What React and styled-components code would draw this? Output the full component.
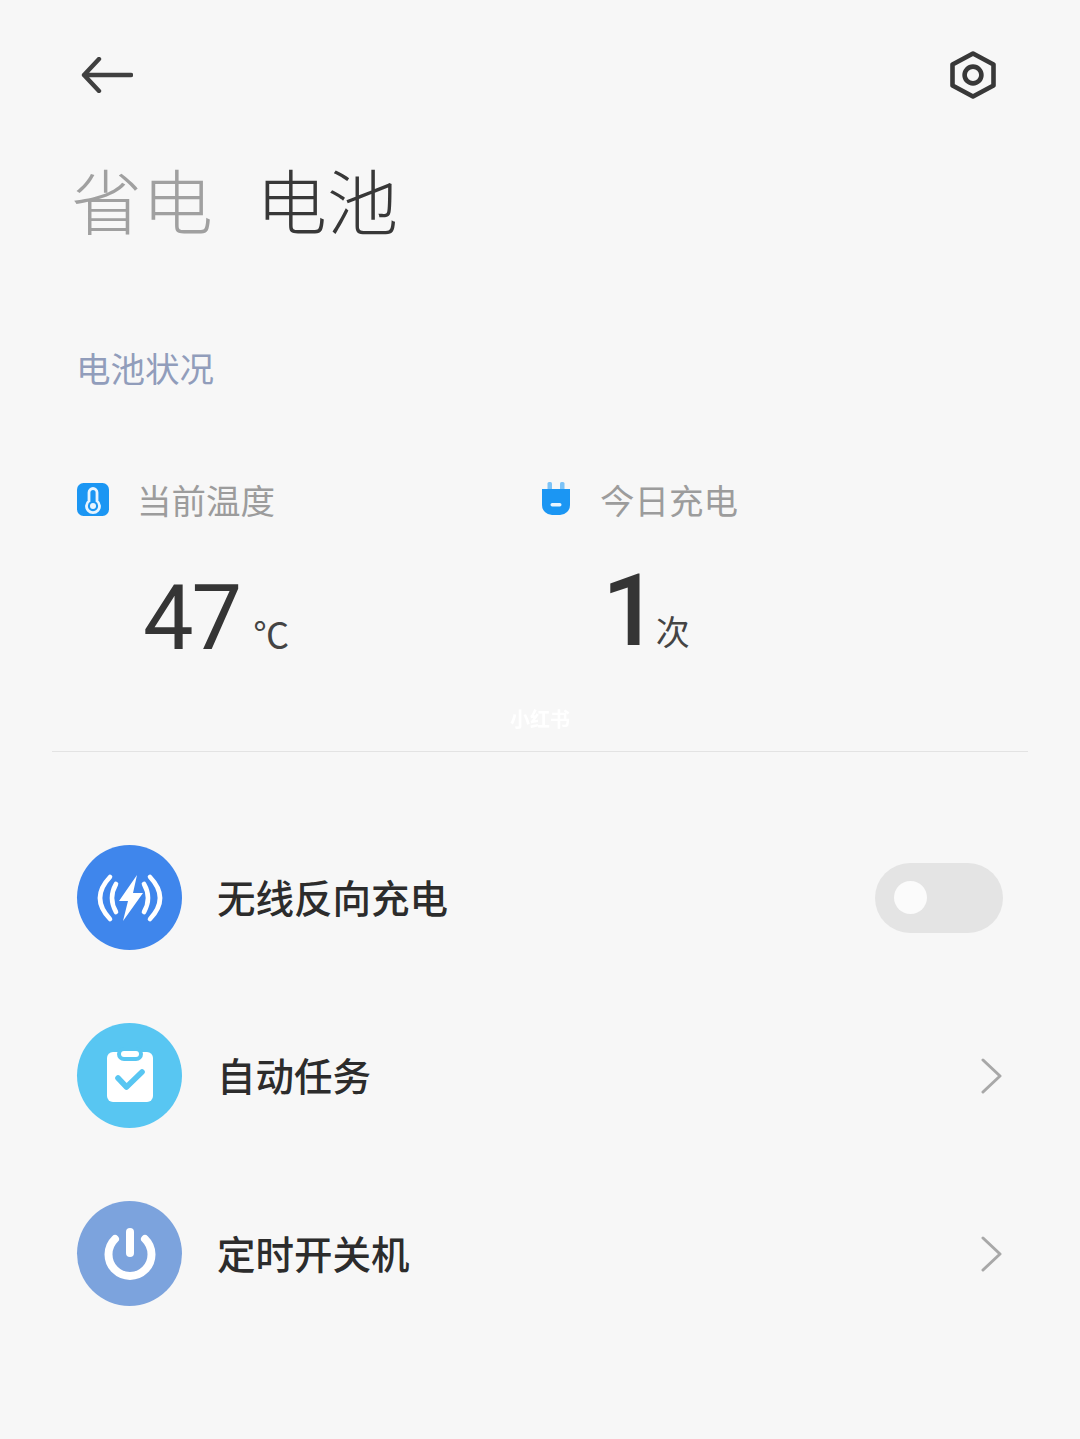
import React from "react";
import styled, { createGlobalStyle } from "styled-components";

const Global = createGlobalStyle`
  html, body { margin: 0; padding: 0; background: #f7f7f7; }
  body { font-family: "Noto Sans CJK SC", "Noto Sans", sans-serif; }
`;
const Page = styled.div`
  position: relative; width: 1080px; height: 1439px; overflow: hidden; background: #f7f7f7;
  display: flex; flex-direction: column; box-sizing: border-box;
`;
const TopBar = styled.div`
  display: flex; justify-content: space-between; align-items: center;
  height: 48px; margin-top: 51px; padding: 0 84px 0 81px;
`;
const Tabs = styled.div`
  display: flex; gap: 43px; margin-top: 46px; padding-left: 71px; height: 107px; align-items: center;
`;
const Tab = styled.div`
  font-size: 71px; line-height: 107px; font-weight: 300;
  color: ${p => p.$active ? "#383838" : "#a0a0a0"};
`;
const SectionLabel = styled.div`
  margin: 90px 0 0 76px; font-size: 34.5px; line-height: 50px; color: #919dbb; font-weight: 400;
`;
const Stats = styled.div`
  display: grid; grid-template-columns: 465px 1fr; padding-left: 77px; margin-top: 82px;
`;
const Stat = styled.div`display: flex; flex-direction: column;`;
const StatHead = styled.div`
  display: flex; align-items: center; height: 50px; gap: ${p => p.$gap}px;
`;
const StatLabel = styled.div`font-size: 34.5px; line-height: 50px; color: #9c9c9c;`;
const StatValue = styled.div`
  display: flex; align-items: baseline; padding-left: ${p => p.$indent}px; height: 110px; margin-top: ${p => p.$top}px;
  color: #353535;
`;
const Num = styled.span`
  font-family: Roboto, "Noto Sans", sans-serif; font-size: ${p => p.$size}px; line-height: 110px;
  font-weight: ${p => p.$weight};
  letter-spacing: -2px;
`;
const Unit = styled.span`
  font-size: ${p => p.$size}px; margin-left: ${p => p.$gap}px; color: #444; line-height: 1;
`;
const Watermark = styled.div`
  position: absolute; left: 510px; top: 705px; font-size: 20px; line-height: 28px; color: #fff;
  font-weight: 700; white-space: nowrap; filter: blur(0.4px);
`;
const Divider = styled.div`
  height: 1px; background: #e3e3e3; margin: 77px 52px 0;
`;
const List = styled.div`
  display: flex; flex-direction: column; gap: 73px; margin-top: 93px; padding: 0 77px;
`;
const Row = styled.div`display: flex; align-items: center; height: 105px;`;
const Circle = styled.div`
  width: 105px; height: 105px; border-radius: 50%; background: ${p => p.$bg};
  display: flex; align-items: center; justify-content: center; flex: none;
`;
const RowText = styled.div`
  margin-left: 35px; flex: 1; font-size: 38.5px; line-height: 50px; color: #2c2c2c; font-weight: 500;
  padding-bottom: 4px;
`;
const Toggle = styled.div`
  width: 128px; height: 70px; border-radius: 35px; background: #e4e4e4; display: flex; align-items: center;
  padding-left: 19px; box-sizing: border-box;
`;
const Knob = styled.div`width: 33px; height: 33px; border-radius: 50%; background: #fbfbfb;`;

const Back = () => (
  <svg width="52" height="36" viewBox="0 0 52 36" fill="none" stroke="#404040" strokeWidth="4.4" strokeLinecap="round" strokeLinejoin="round">
    <path d="M50 18H3M18 2 3 18l15 16" />
  </svg>
);
const Hex = () => (
  <svg width="46" height="48" viewBox="0 0 46 48" fill="none" stroke="#383838" strokeWidth="4.6" strokeLinejoin="round">
    <path d="M23 2.500 43.500 13.500v21L23 45.500 2.500 34.500v-21Z" />
    <circle cx="23" cy="24" r="8.400" />
  </svg>
);
const Thermo = () => (
  <svg width="32" height="33" viewBox="0 0 32 33">
    <rect width="32" height="33" rx="6.500" fill="#1b96f3" />
    <path d="M12 9.500a4 4 0 0 1 8 0v8.500a6.500 6.500 0 1 1-8 0Z" fill="none" stroke="#e8f5ff" strokeWidth="2.800" />
    <circle cx="16" cy="23" r="3" fill="#e8f5ff" />
  </svg>
);
const Plug = () => (
  <svg width="28" height="34" viewBox="0 0 28 34">
    <rect x="5.500" y="0" width="4.500" height="9" rx="1.500" fill="#7cc3f7" />
    <rect x="18" y="0" width="4.500" height="9" rx="1.500" fill="#7cc3f7" />
    <path d="M0 7h28v16a10 10 0 0 1-10 10h-8A10 10 0 0 1 0 23Z" fill="#1b96f3" />
    <rect x="8.500" y="21" width="11" height="3.500" rx="1.700" fill="#e8f5ff" />
  </svg>
);
const Wireless = () => (
  <svg width="64" height="46" viewBox="0 0 64 46" fill="none" stroke="#fff" strokeLinecap="round" strokeLinejoin="round" strokeWidth="4.600" style={{ overflow: "visible" }}>
    <path d="M12 2Q-8 23 12 44M18 9Q10 23 18 37" />
    <path d="M52 2Q72 23 52 44M46 9Q54 23 46 37" />
    <path d="M39 0 21 26H30L25 46 45 18H35Z" fill="#fff" stroke="none" />
  </svg>
);
const Clip = () => (
  <svg width="46" height="52" viewBox="0 0 46 52" style={{ overflow: "visible" }}>
    <rect x="0" y="2" width="46" height="50" rx="6" fill="#fff" />
    <rect x="10" y="-3" width="26" height="14" rx="7" fill="#58c6f2" />
    <rect x="14" y="1" width="18" height="6" rx="3" fill="#fff" />
    <path d="M11 28l8.500 9L35 22" fill="none" stroke="#58c6f2" strokeWidth="5.600" strokeLinecap="round" strokeLinejoin="round" />
  </svg>
);
const Power = () => (
  <svg width="52" height="52" viewBox="0 0 52 52" fill="none" stroke="#fff" strokeLinecap="round">
    <path d="M11 11A21.500 21.500 0 1 0 41 11" strokeWidth="8" />
    <path d="M26 4v21" strokeWidth="8" />
  </svg>
);
const Chevron = () => (
  <svg width="22" height="36" viewBox="0 0 22 36" fill="none" stroke="#a8a8a8" strokeWidth="3" strokeLinecap="round" strokeLinejoin="round">
    <path d="M2 2l17 16L2 34" />
  </svg>
);

const tasks = [
  { bg: "#3f86ec", icon: <Wireless />, label: "无线反向充电", control: <Toggle><Knob /></Toggle> },
  { bg: "#58c6f2", icon: <Clip />, label: "自动任务", control: <Chevron /> },
  { bg: "#7ca3dd", icon: <Power />, label: "定时开关机", control: <Chevron /> },
];

export default function App() {
  return (
    <Page>
      <Global />
      <TopBar><Back /><Hex /></TopBar>
      <Tabs>
        <Tab>省电</Tab>
        <Tab $active>电池</Tab>
      </Tabs>
      <SectionLabel>电池状况</SectionLabel>
      <Stats>
        <Stat>
          <StatHead $gap={28}><Thermo /><StatLabel>当前温度</StatLabel></StatHead>
          <StatValue $indent={66} $top={40}>
            <Num $size={90} $weight={400}>47</Num>
            <Unit $size={36} $gap={13}>℃</Unit>
          </StatValue>
        </Stat>
        <Stat>
          <StatHead $gap={30}><Plug /><StatLabel>今日充电</StatLabel></StatHead>
          <StatValue $indent={60} $top={32}>
            <Num $size={100} $weight={500}>1</Num>
            <Unit $size={34} $gap={-1}>次</Unit>
          </StatValue>
        </Stat>
      </Stats>
      <Watermark>小红书</Watermark>
      <Divider />
      <List>
        {tasks.map(t => (
          <Row key={t.label}>
            <Circle $bg={t.bg}>{t.icon}</Circle>
            <RowText>{t.label}</RowText>
            {t.control}
          </Row>
        ))}
      </List>
    </Page>
  );
}
